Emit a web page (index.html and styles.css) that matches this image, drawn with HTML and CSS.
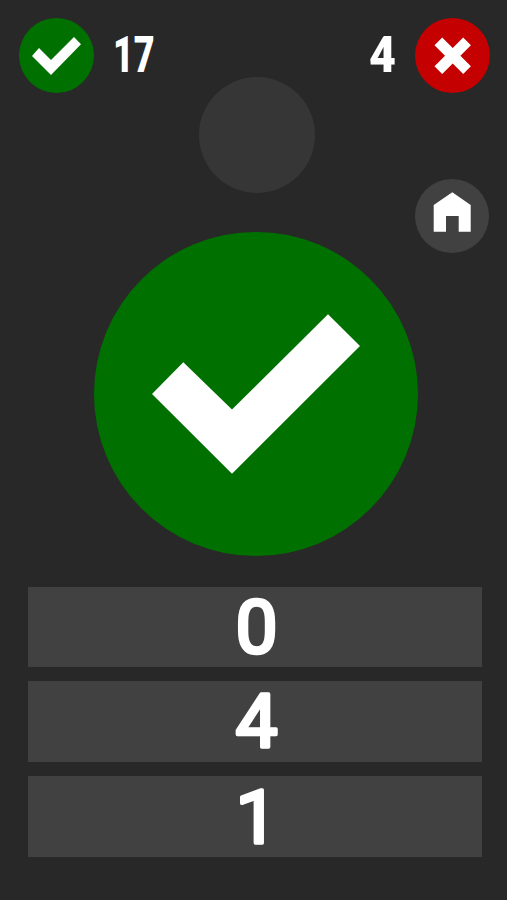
FILE: index.html
```html
<!DOCTYPE html>
<html lang="en">
<head>
<meta charset="utf-8">
<title>Quiz</title>
<link rel="stylesheet" href="styles.css">
</head>
<body>
<main class="screen">
  <header class="scores">
    <div class="score">
      <div class="badge badge-ok">
        <svg class="icon" viewBox="19 18 75 75"><path d="M32 56 39 48 51 60 74 37 81 44.3 51 75Z"/></svg>
      </div>
      <span class="score-num score-num-left">17</span>
    </div>
    <div class="score">
      <span class="score-num score-num-right">4</span>
      <div class="badge badge-bad">
        <svg class="icon" viewBox="415 18 75 75"><path d="M442.2 37.5 452.7 48 463.2 37.5 470.9 45.2 460.4 55.7 470.9 66.2 463.2 73.9 452.7 63.4 442.2 73.9 434.5 66.2 445 55.7 434.5 45.2Z"/></svg>
      </div>
    </div>
  </header>
  <div class="avatar"></div>
  <button class="home" type="button" aria-label="Home">
    <svg class="icon" viewBox="415 179 74 74"><path d="M452.3 192.3 470.7 205V231.7H458.7V216H446V231.7H433.7V205Z"/></svg>
  </button>
  <div class="result">
    <svg class="icon" viewBox="94 232 324 324"><path d="M152 394 183.3 362.3 232 409.5 328 314.3 360 346 232 473.7Z"/></svg>
  </div>
  <div class="answers">
    <div class="answer"><svg class="digit"><text x="228.5" y="66">0</text></svg></div>
    <div class="answer"><svg class="digit"><text x="228.5" y="66">4</text></svg></div>
    <div class="answer"><svg class="digit"><text x="228.5" y="67">1</text></svg></div>
  </div>
</main>
</body>
</html>
```

FILE: styles.css
```css
html, body {
  margin: 0;
  height: 100%;
  background: #282828;
}

.screen {
  position: relative;
  box-sizing: border-box;
  width: 507px;
  height: 900px;
  padding-top: 18px;
  overflow: hidden;
  background: #282828;
  color: #fff;
}

.scores {
  display: flex;
  justify-content: space-between;
  padding: 0 17px 0 19px;
}

.score {
  display: flex;
  align-items: center;
  gap: 19px;
}

.badge {
  width: 75px;
  height: 75px;
  border-radius: 50%;
}

.badge-ok { background: #007000; }
.badge-bad { background: #c40000; }

.score-num {
  display: inline-block;
  font-family: Roboto, "Liberation Sans", sans-serif;
  font-weight: 900;
  font-size: 50px;
  line-height: 75px;
}

.score-num-left {
  width: 40px;
  transform: scaleX(0.72);
  transform-origin: left center;
}

.score-num-right {
  transform: scaleX(0.93);
  transform-origin: right center;
}

.icon {
  display: block;
  width: 100%;
  height: 100%;
  fill: #fff;
}

.avatar {
  width: 116px;
  height: 116px;
  margin: -16px 0 0 199px;
  border-radius: 50%;
  background: #363636;
}

.home {
  position: absolute;
  top: 179px;
  left: 415px;
  width: 74px;
  height: 74px;
  padding: 0;
  border: 0;
  border-radius: 50%;
  background: #414141;
}

.result {
  width: 324px;
  height: 324px;
  margin: 39px 0 0 94px;
  border-radius: 50%;
  background: #007000;
}

.answers {
  display: flex;
  flex-direction: column;
  gap: 14.25px;
  margin: 30.5px 25px 0 28px;
}

.answer {
  height: 80.5px;
  background: #414141;
}

.digit {
  display: block;
  width: 100%;
  height: 100%;
  overflow: visible;
}

.digit text {
  font-family: Roboto, "Liberation Sans", sans-serif;
  font-size: 75px;
  text-anchor: middle;
  fill: #fff;
  stroke: #fff;
  stroke-width: 3.5px;
  stroke-linejoin: round;
  stroke-linecap: round;
}
```
